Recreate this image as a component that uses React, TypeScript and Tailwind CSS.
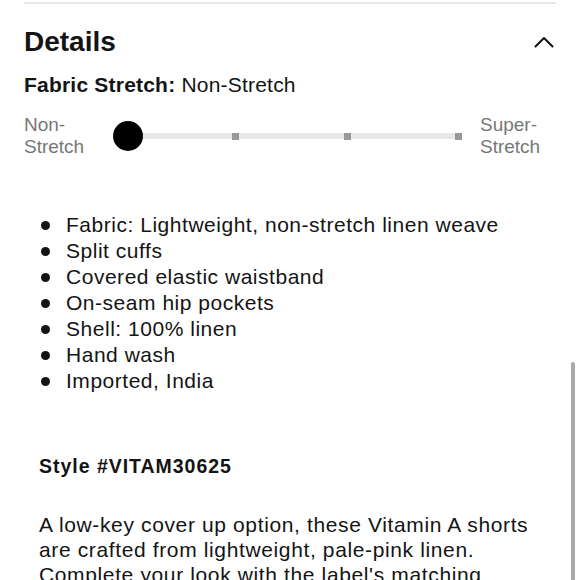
const bullets = [
  "Fabric: Lightweight, non-stretch linen weave",
  "Split cuffs",
  "Covered elastic waistband",
  "On-seam hip pockets",
  "Shell: 100% linen",
  "Hand wash",
  "Imported, India",
];

const ChevronUp = () => (
  <svg width="20" height="12" viewBox="0 0 20 12" fill="none">
    <polyline
      points="1.5,10.5 10,2 18.5,10.5"
      stroke="#111"
      strokeWidth="2"
      strokeLinecap="round"
      strokeLinejoin="round"
    />
  </svg>
);

const StretchSlider = () => (
  <div className="mt-[15px] flex items-center">
    <div className="w-[89px] text-[19px] leading-[22px] text-[#777]">
      Non-
      <br />
      Stretch
    </div>
    <div className="relative h-[32px] w-[350px]">
      <div className="absolute left-[15px] top-[13px] flex h-[6px] w-[334px] items-center justify-between bg-[#e7e7e7]">
        <span />
        <span className="h-[7px] w-[7px] bg-[#999]" />
        <span className="h-[7px] w-[7px] bg-[#999]" />
        <span className="h-[7px] w-[7px] bg-[#999]" />
      </div>
      <div className="absolute left-0 top-[1px] h-[30px] w-[30px] rounded-full bg-black" />
    </div>
    <div className="ml-[17px] text-[19px] leading-[22px] text-[#777]">
      Super-
      <br />
      Stretch
    </div>
  </div>
);

export default function App() {
  return (
    <div className="relative h-[580px] w-[580px] overflow-hidden bg-white font-['Liberation_Sans',Arial,sans-serif] text-[#141414]">
      <div className="mx-6 mt-[2px] h-[2px] bg-[#e8e8e8]" />

      <div className="px-6">
        <div className="mt-[20px] flex h-[36px] items-center justify-between">
          <h2 className="text-[28px] font-bold leading-[36px]">Details</h2>
          <div className="mr-[2px]">
            <ChevronUp />
          </div>
        </div>

        <p className="mt-[11px] text-[21px] leading-[28px] tracking-[0.01em]">
          <span className="font-bold">Fabric Stretch:</span> Non-Stretch
        </p>

        <StretchSlider />

        <ul className="mt-[54px] pl-[17px] text-[21px] leading-[26px] tracking-[0.025em]">
          {bullets.map((item) => (
            <li key={item} className="flex items-center gap-[16px]">
              <span className="h-[9px] w-[9px] shrink-0 rounded-full bg-[#141414]" />
              <span>{item}</span>
            </li>
          ))}
        </ul>

        <div className="pl-[15px]">
          <h3 className="mt-[58px] text-[19.5px] font-bold leading-[28px] tracking-[0.05em]">
            Style #VITAM30625
          </h3>
          <p className="mt-[32px] text-[21px] leading-[25px] tracking-[0.03em]">
            A low-key cover up option, these Vitamin A shorts
            <br />
            are crafted from lightweight, pale-pink linen.
            <br />
            Complete your look with the label's matching
          </p>
        </div>
      </div>

      {/* scroll indicator */}
      <div className="absolute right-[5px] top-[362px] h-[230px] w-[4px] rounded-full bg-[#a9a9a9]" />
    </div>
  );
}
